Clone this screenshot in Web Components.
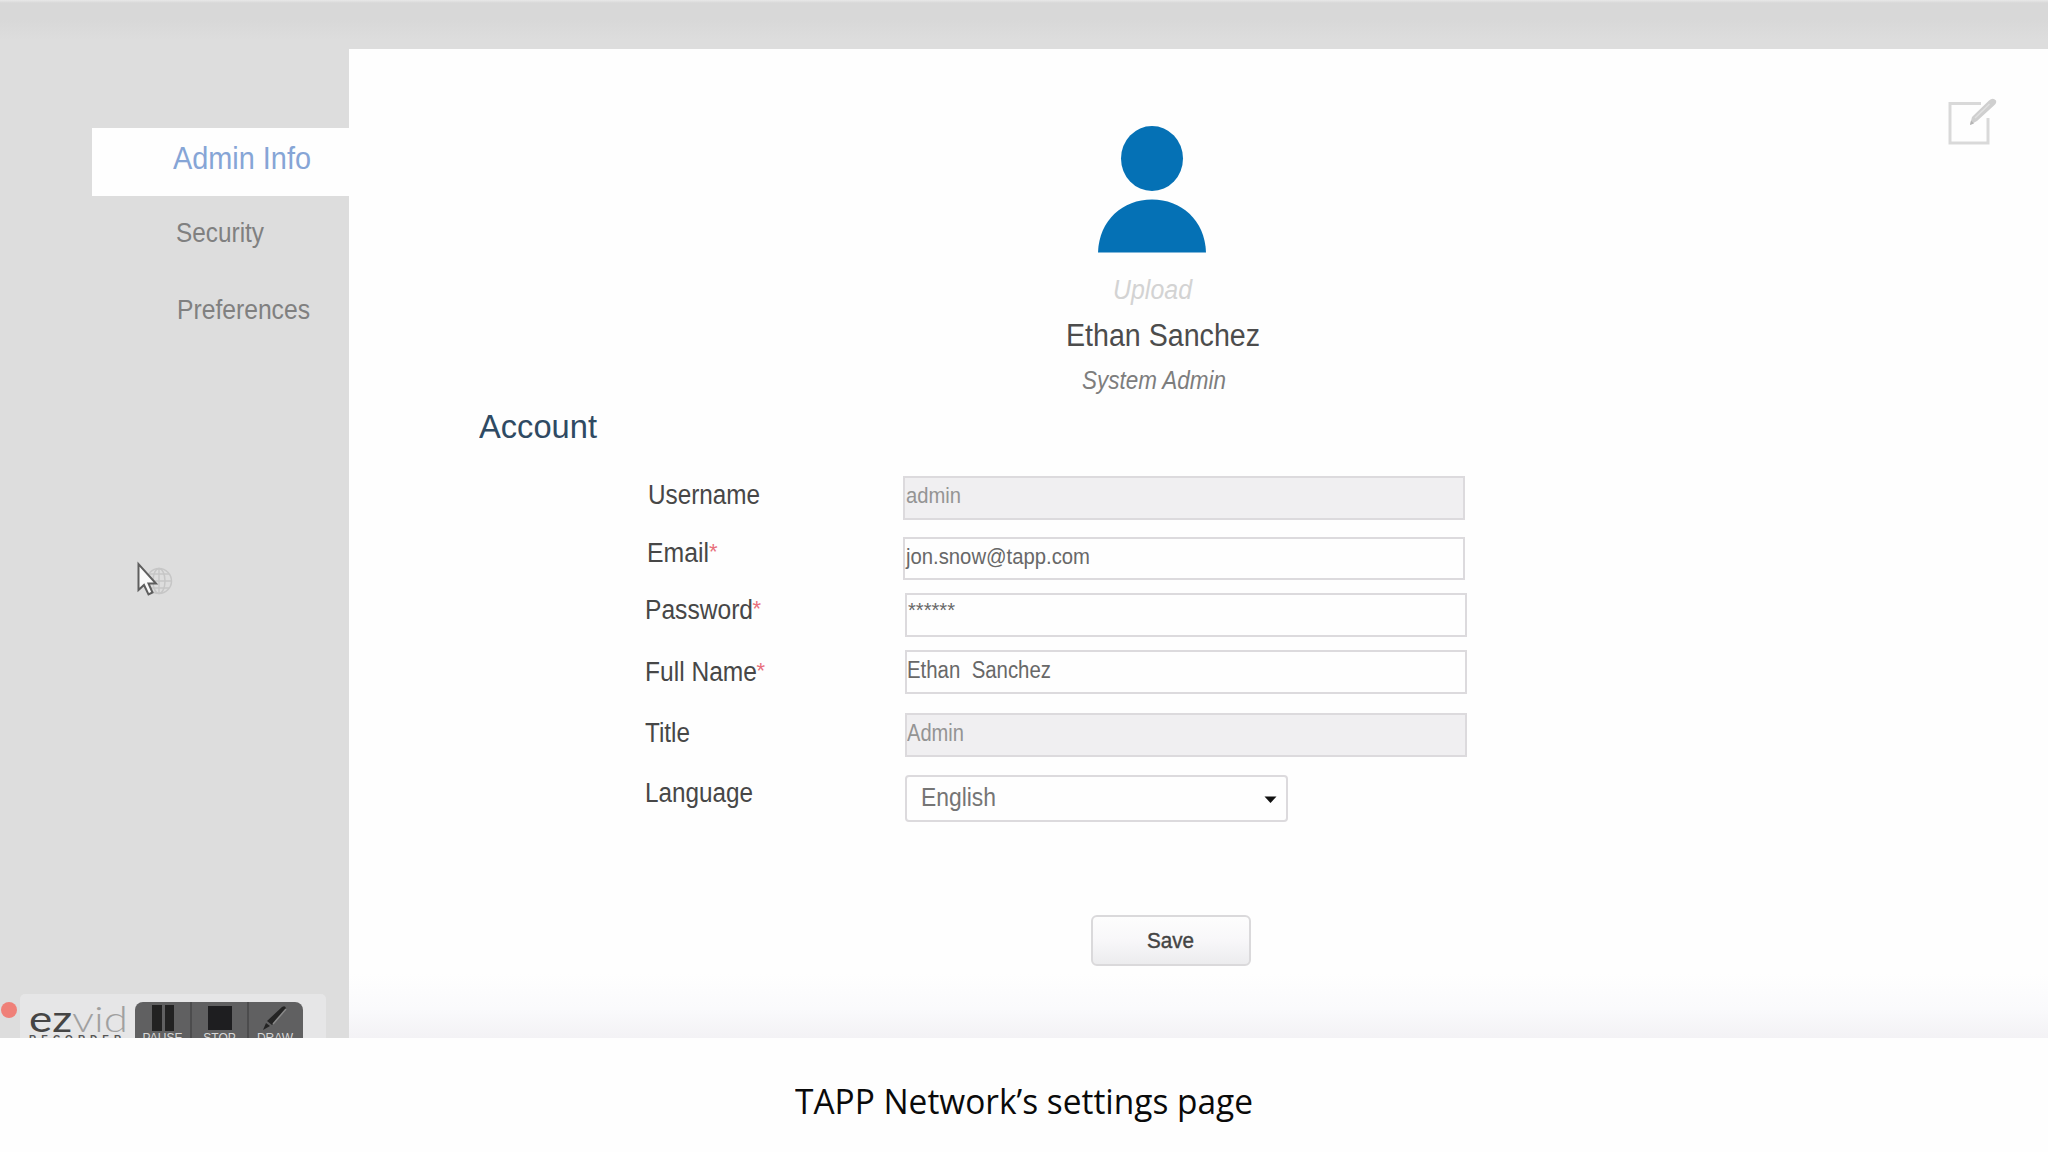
<!DOCTYPE html>
<html lang="en">
<head>
<meta charset="utf-8">
<title>TAPP Network</title>
<style>
    html, body {
        margin: 0;
        width: 2048px;
        height: 1152px;
        overflow: hidden;
        background: #fefefe;
        font-family: "Liberation Sans", Arial, sans-serif;
    }
</style>
</head>
<body>
<settings-page>
    <side-nav slot="nav">
        <nav-item active style="padding: 15px 0 0 81px"><fit-text size="31" width="138">Admin Info</fit-text></nav-item>
        <nav-item style="padding: 23.5px 0 0 84px"><fit-text size="27" width="88">Security</fit-text></nav-item>
        <nav-item style="padding: 50.5px 0 0 84.5px"><fit-text size="27" width="133">Preferences</fit-text></nav-item>
    </side-nav>

    <user-profile slot="profile">
        <fit-text slot="upload" size="27" width="79">Upload</fit-text>
        <fit-text slot="name" size="31" width="194">Ethan Sanchez</fit-text>
        <fit-text slot="role" size="25" width="144">System Admin</fit-text>
    </user-profile>

    <fit-text slot="heading" size="33" width="118">Account</fit-text>

    <form-field style="--label-x: 1px; --label-y: 5.5px" disabled>
        <fit-text slot="label" size="27" width="112">Username</fit-text>
        <fit-text size="22" width="55">admin</fit-text>
    </form-field>
    <form-field required style="--gap: 17px; --height: 43px; --label-x: 0.5px; --label-y: 3px; --value-y: 7px">
        <fit-text slot="label" size="27" width="62">Email</fit-text>
        <fit-text size="22" width="184">jon.snow@tapp.com</fit-text>
    </form-field>
    <form-field required style="--gap: 13px; --label-x: -2px; --label-y: 4px; --control-x: 2px; --value-y: 5px">
        <fit-text slot="label" size="27" width="108">Password</fit-text>
        <fit-text size="20" width="47">******</fit-text>
    </form-field>
    <form-field required style="--gap: 13px; --label-x: -2px; --label-y: 8.5px; --control-x: 2px; --value-x: 0px">
        <fit-text slot="label" size="27" width="112">Full Name</fit-text>
        <fit-text size="23" width="144">Ethan  Sanchez</fit-text>
    </form-field>
    <form-field disabled style="--gap: 19px; --label-x: -2px; --label-y: 6.5px; --control-x: 2px; --value-y: 7px; --value-x: 0px">
        <fit-text slot="label" size="27" width="45">Title</fit-text>
        <fit-text size="23" width="57">Admin</fit-text>
    </form-field>
    <form-field select style="--gap: 18px; --height: 47px; --label-x: -2px; --label-y: 5px; --control-x: 2px; --value-x: 14.5px; --value-y: 8px">
        <fit-text slot="label" size="27" width="108">Language</fit-text>
        <fit-text size="25" width="75">English</fit-text>
    </form-field>

    <save-button slot="actions"><fit-text size="22" width="47">Save</fit-text></save-button>
    <fit-text slot="caption" size="34" width="458">TAPP Network’s settings page</fit-text>
</settings-page>
<recorder-bar></recorder-bar>
<mouse-pointer></mouse-pointer>

<script>
// one line of text, squeezed or stretched to the given width
class FitTextElement extends HTMLElement {
    constructor() {
        super()
        this.attachShadow({mode : 'open'})
        this.shadowRoot.innerHTML = `
            <style>
                :host { display: flex; align-items: flex-start; line-height: 1; flex: none; }
                span { display: block; flex: none; white-space: pre; transform-origin: 0 0; }
            </style>
            <span><slot></slot></span>
            `
    }

    connectedCallback() {
        const size = Number(this.getAttribute('size'))
        this.style.fontSize = size + 'px'
        this.style.height = size + 'px'
        this.style.width = this.getAttribute('width') + 'px'
        this.fit()
        document.fonts.ready.then(() => this.fit())
    }

    fit() {
        const span = this.shadowRoot.querySelector('span')
        span.style.transform = 'none'
        const natural = span.getBoundingClientRect().width
        if (natural > 0) {
            span.style.transform = 'scaleX(' + Number(this.getAttribute('width')) / natural + ')'
        }
    }
}

class SettingsPageElement extends HTMLElement {
    constructor() {
        super()
        this.attachShadow({mode : 'open'})
        this.shadowRoot.innerHTML = `
            <style>
                :host {
                    display: flex;
                    flex-direction: column;
                    width: 2048px;
                    height: 1152px;
                }
                .screen {
                    box-sizing: border-box;
                    display: flex;
                    flex: none;
                    height: 1038px;
                    padding-top: 49px;
                    background: linear-gradient(#e8e8e8 0, #d8d8d8 3px, #d8d8d8 20px, #dddddd 40px, #dddddd 100%);
                }
                .panel {
                    flex: 1;
                    display: flex;
                    background: linear-gradient(#fefefe 0, #fefefe 925px, #fafafc 960px, #f3f2f5 989px);
                }
                .content {
                    width: 1599px;
                    display: flex;
                    flex-direction: column;
                }
                .heading { padding: 17px 0 0 130.5px; color: #2f4a63; }
                .fields { padding: 33px 0 0 298px; }
                .actions { padding: 93px 0 0 742px; }
                edit-icon { margin: 47px 0 0 -2px; }
                .caption {
                    flex: 1;
                    display: flex;
                    justify-content: center;
                    padding-top: 46px;
                    font-family: "Open Sans", "Noto Sans", sans-serif;
                    color: #0a0a0a;
                }
            </style>
            <div class="screen">
                <slot name="nav"></slot>
                <div class="panel">
                    <div class="content">
                        <slot name="profile"></slot>
                        <div class="heading"><slot name="heading"></slot></div>
                        <div class="fields"><slot></slot></div>
                        <div class="actions"><slot name="actions"></slot></div>
                    </div>
                    <edit-icon></edit-icon>
                </div>
            </div>
            <div class="caption"><slot name="caption"></slot></div>
            `
    }
}

class SideNavElement extends HTMLElement {
    constructor() {
        super()
        this.attachShadow({mode : 'open'})
        this.shadowRoot.innerHTML = `
            <style>
                :host {
                    box-sizing: border-box;
                    display: block;
                    width: 348.5px;
                    padding: 79px 0 0 92px;
                }
            </style>
            <slot></slot>
            `
    }
}

class NavItemElement extends HTMLElement {
    constructor() {
        super()
        this.attachShadow({mode : 'open'})
        this.shadowRoot.innerHTML = `
            <style>
                :host { box-sizing: border-box; display: block; color: #808080; }
                :host([active]) { height: 68px; background: #fefefe; color: #86a5d6; }
            </style>
            <slot></slot>
            `
    }
}

class UserProfileElement extends HTMLElement {
    constructor() {
        super()
        this.attachShadow({mode : 'open'})
        this.shadowRoot.innerHTML = `
            <style>
                :host { display: block; padding: 77px 0 0 717px; }
                svg { display: block; margin-left: 32px; }
                .upload { padding: 24px 0 0 47px; color: #d3d3d3; font-style: italic; }
                .name { padding: 16px 0 0 0; color: #4c4c4c; }
                .role { padding: 17px 0 0 16px; color: #7d7d7d; font-style: italic; }
            </style>
            <svg width="108" height="127" viewBox="0 0 108 127" fill="#0571b5">
                <ellipse cx="54" cy="32.5" rx="31" ry="32.5"/>
                <path d="M0 126.5 C1 94 25 73.500 54 73.500 S107 94 108 126.500 Z"/>
            </svg>
            <div class="upload"><slot name="upload"></slot></div>
            <div class="name"><slot name="name"></slot></div>
            <div class="role"><slot name="role"></slot></div>
            `
    }
}

class FormFieldElement extends HTMLElement {
    constructor() {
        super()
        this.attachShadow({mode : 'open'})
        this.shadowRoot.innerHTML = `
            <style>
                :host {
                    display: flex;
                    height: var(--height, 44px);
                    margin-top: var(--gap, 0);
                }
                .label {
                    box-sizing: border-box;
                    display: flex;
                    width: 256px;
                    padding-top: var(--label-y);
                    color: #474747;
                }
                .label slot { display: block; margin-left: var(--label-x, 0); }
                .star { display: none; color: #e8707c; font-size: 22px; line-height: 24px; }
                :host([required]) .star { display: block; }
                .control {
                    box-sizing: border-box;
                    display: flex;
                    justify-content: space-between;
                    width: 562px;
                    margin-left: var(--control-x, 0);
                    padding: var(--value-y, 7px) 9px 0 var(--value-x, 1px);
                    border: 2px solid #dcdadd;
                    background: #fefefe;
                    color: #686868;
                }
                :host([disabled]) .control { background: #f0eff1; color: #949494; }
                :host([select]) .control { width: 383px; border-radius: 4px; color: #757575; }
                svg { display: none; margin-top: 11px; }
                :host([select]) svg { display: block; }
            </style>
            <div class="label"><slot name="label"></slot><span class="star">*</span></div>
            <div class="control">
                <slot></slot>
                <svg width="13" height="7" viewBox="0 0 13 7"><path d="M0.500 0.500 H12.500 L6.500 7 Z" fill="#111"/></svg>
            </div>
            `
    }
}

class SaveButtonElement extends HTMLElement {
    constructor() {
        super()
        this.attachShadow({mode : 'open'})
        this.shadowRoot.innerHTML = `
            <style>
                :host { display: block; }
                button {
                    box-sizing: border-box;
                    display: flex;
                    justify-content: center;
                    align-items: flex-start;
                    width: 160px;
                    height: 51px;
                    padding: 13px 0 0;
                    border: 2px solid #dad9db;
                    border-radius: 6px;
                    background: linear-gradient(#fdfdfd, #f8f7f9 50%, #ececee);
                    color: #444;
                    font-family: inherit;
                    font-weight: normal;
                    -webkit-text-stroke: 0.4px #444;
                }
            </style>
            <button><slot></slot></button>
            `
    }
}

class EditIconElement extends HTMLElement {
    constructor() {
        super()
        this.attachShadow({mode : 'open'})
        this.shadowRoot.innerHTML = `
            <style>
                :host { display: block; }
                svg { display: block; }
            </style>
            <svg width="52" height="52" viewBox="0 0 52 52" fill="none">
                <path d="M35 7.500 H4 V47 H42 V22" stroke="#d9d9d9" stroke-width="3"/>
                <path d="M24 29 L26 21 L43 4.500 Q47 1 50 4.500 Q51 7 48 9.500 L31 25 Z" fill="#cfcfcf"/>
                <path d="M29 22 L43.500 8" stroke="#e0e0e0" stroke-width="1.500"/>
                <path d="M24 29 L25 24.500 L28 27.500 Z" fill="#b5b5b5"/>
            </svg>
            `
    }
}

// recorder toolbar floating over the bottom left corner, cut off by the screen edge
class RecorderBarElement extends HTMLElement {
    constructor() {
        super()
        this.attachShadow({mode : 'open'})
        this.shadowRoot.innerHTML = `
            <style>
                :host {
                    position: absolute;
                    left: 0;
                    top: 994px;
                    width: 326px;
                    height: 44px;
                    overflow: hidden;
                    display: flex;
                }
                .dot {
                    width: 16px;
                    height: 16px;
                    margin: 8px 3px 0 1px;
                    border-radius: 50%;
                    background: #ef8078;
                }
                .bar {
                    box-sizing: border-box;
                    display: flex;
                    width: 306px;
                    height: 70px;
                    padding: 8px 23px 0 9px;
                    border-radius: 5px 5px 0 0;
                    background: #e6e6e7;
                }
                .brand { width: 106px; }
                .logo {
                    height: 35px;
                    margin-top: -2px;
                    font-family: Lato, sans-serif;
                    color: #454545;
                }
                .logo i { font-style: normal; font-weight: 300; color: #a0a0a0; }
                .tag { font-size: 10px; line-height: 10px; font-weight: bold; color: #555; letter-spacing: 5px; }
                .tools {
                    display: flex;
                    flex: 1;
                    border-radius: 8px 8px 0 0;
                    background: #606061;
                    overflow: hidden;
                }
                .tool {
                    box-sizing: border-box;
                    width: 57px;
                    display: flex;
                    flex-direction: column;
                    align-items: center;
                    padding-top: 3px;
                    color: #d8d8d8;
                    font-size: 12px;
                    line-height: 12px;
                    border-right: 2px solid #4c4c4d;
                }
                .tool:last-child { border: 0; width: 52px; }
                svg { display: block; flex: none; margin-bottom: 1px; }
            </style>
            <div class="dot"></div>
            <div class="bar">
                <div class="brand">
                    <div class="logo"><fit-text size="36" width="99">ez<i>vid</i></fit-text></div>
                    <div class="tag">RECORDER</div>
                </div>
                <div class="tools">
                    <div class="tool">
                        <svg width="24" height="26" viewBox="0 0 24 26" fill="#222"><path d="M1 0 H11 V26 H1 Z M14 0 H23 V26 H14 Z"/></svg>
                        PAUSE
                    </div>
                    <div class="tool">
                        <svg width="24" height="26" viewBox="0 0 24 26" fill="#1e1e20"><path d="M0 1 H24 V25 H0 Z"/></svg>
                        STOP
                    </div>
                    <div class="tool">
                        <svg width="26" height="26" viewBox="0 0 26 26" fill="#242424">
                            <path d="M1 25 L4 18 L8 21 Z M5 16 L20 2 Q24 0 24 4 L10 20 Z"/>
                            <path d="M11 19 L24 4" stroke="#8a8a8a" stroke-width="1.500"/>
                        </svg>
                        DRAW
                    </div>
                </div>
            </div>
            `
    }
}

class MousePointerElement extends HTMLElement {
    constructor() {
        super()
        this.attachShadow({mode : 'open'})
        this.shadowRoot.innerHTML = `
            <style>
                :host { position: absolute; left: 136px; top: 561px; }
                svg { display: block; }
            </style>
            <svg width="38" height="38" viewBox="0 0 38 38" fill="none">
                <g stroke="#c6c6c6" stroke-width="1.500">
                    <circle cx="23" cy="20" r="12.500"/>
                    <ellipse cx="23" cy="20" rx="6" ry="12.500"/>
                    <path d="M23 7.500 V32.500 M10.500 20 H35.500 M13 13 H33 M13 27 H33"/>
                </g>
                <path d="M2.500 3 V29 L8 24 L12.500 33.500 L16.500 31.500 L12.500 22.500 H20 Z" fill="#fafafa" stroke="#5e5e5e" stroke-width="2"/>
            </svg>
            `
    }
}

window.customElements.define('fit-text', FitTextElement)
window.customElements.define('settings-page', SettingsPageElement)
window.customElements.define('side-nav', SideNavElement)
window.customElements.define('nav-item', NavItemElement)
window.customElements.define('user-profile', UserProfileElement)
window.customElements.define('form-field', FormFieldElement)
window.customElements.define('save-button', SaveButtonElement)
window.customElements.define('edit-icon', EditIconElement)
window.customElements.define('recorder-bar', RecorderBarElement)
window.customElements.define('mouse-pointer', MousePointerElement)
</script>
</body>
</html>
